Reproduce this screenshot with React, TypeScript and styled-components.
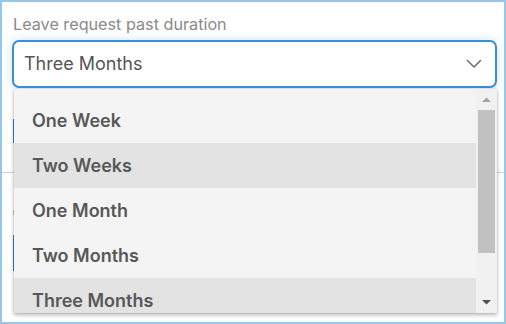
import React from "react";
import styled, { createGlobalStyle } from "styled-components";

const Global = createGlobalStyle`
  html, body { margin: 0; padding: 0; background: #ffffff; }
  body { font-family: Inter, "Noto Sans", sans-serif; }
  * { box-sizing: border-box; }
`;

const Frame = styled.div`
  position: relative;
  width: 506px;
  height: 324px;
  border: 2px solid #93c8ec;
  background: #ffffff;
  padding: 12px 7px 0 10px;
  overflow: hidden;
`;

const Label = styled.div`
  font-size: 16.2px;
  line-height: 20px;
  color: #8a8a8a;
  margin: 0 0 6px 1px;
`;

const SelectBox = styled.div`
  height: 48px;
  border: 2px solid #3b8fd9;
  border-radius: 7px;
  box-shadow: 0 0 10px rgba(59, 143, 217, 0.25);
  display: flex;
  align-items: center;
  justify-content: space-between;
  padding: 0 13px 0 10px;
  background: #ffffff;
`;

const Value = styled.span`
  font-size: 18px;
  color: #555555;
  line-height: 22px;
`;

const Underlay = styled.div`
  display: flex;
  flex-direction: column;
`;

const FieldEdge = styled.div<{ $top: number; $h: number }>`
  margin-top: ${(p) => p.$top}px;
  margin-left: 1px;
  height: ${(p) => p.$h}px;
  width: 20px;
  border-left: 1px solid #3d7fc1;
`;

const Divider = styled.div`
  margin: 29px -7px 0 -10px;
  height: 1px;
  background: #cfcfcf;
`;

const Tick = styled.div`
  margin: 37px 0 0 1px;
  width: 1px;
  height: 5px;
  background: #c4c4c4;
`;

const Menu = styled.div`
  position: absolute;
  left: 12px;
  top: 87px;
  width: 483px;
  height: 224px;
  background: #f4f4f4;
  box-shadow: 0 2px 4px rgba(0, 0, 0, 0.28), 0 0 2px rgba(0, 0, 0, 0.12);
  display: flex;
  overflow: hidden;
`;

const Options = styled.div`
  flex: 1;
  display: flex;
  flex-direction: column;
  padding-top: 9px;
`;

const Option = styled.div<{ $active?: boolean }>`
  flex: none;
  height: 45px;
  display: flex;
  align-items: center;
  padding-left: 18px;
  font-size: 18px;
  font-weight: 600;
  color: #585858;
  background: ${(p) => (p.$active ? "#e3e3e3" : "transparent")};
`;

const ScrollTrack = styled.div`
  width: 21px;
  flex: none;
  background: #f1f1f1;
  display: flex;
  flex-direction: column;
  align-items: center;
  padding: 0 2px;
`;

const Arrow = styled.div`
  height: 21px;
  width: 100%;
  display: flex;
  align-items: center;
  justify-content: center;
  flex: none;
`;

const Thumb = styled.div`
  width: 17px;
  height: 143px;
  background: #c1c1c1;
  flex: none;
`;

const Spacer = styled.div`
  flex: 1;
`;

const options = ["One Week", "Two Weeks", "One Month", "Two Months", "Three Months"];
const active = new Set(["Two Weeks", "Three Months"]);

export default function App() {
  return (
    <>
      <Global />
      <Frame>
        <Label>Leave request past duration</Label>
        <SelectBox>
          <Value>Three Months</Value>
          <svg width="16" height="10" viewBox="0 0 16 10" fill="none">
            <path d="M1.5 1.5 L8 8 L14.5 1.5" stroke="#707070" strokeWidth="1.6" strokeLinecap="round" strokeLinejoin="round" />
          </svg>
        </SelectBox>
        <Underlay>
          <FieldEdge $top={31} $h={24} />
          <Divider />
          <Tick />
          <FieldEdge $top={20} $h={36} />
        </Underlay>
        <Menu>
          <Options>
            {options.map((o) => (
              <Option key={o} $active={active.has(o)}>
                {o}
              </Option>
            ))}
          </Options>
          <ScrollTrack>
            <Arrow>
              <svg width="9" height="5" viewBox="0 0 9 5">
                <path d="M0 5 L4.5 0.5 L9 5 Z" fill="#a3a3a3" />
              </svg>
            </Arrow>
            <Thumb />
            <Spacer />
            <Arrow>
              <svg width="9" height="5" viewBox="0 0 9 5">
                <path d="M0 0 L9 0 L4.5 4.5 Z" fill="#505050" />
              </svg>
            </Arrow>
          </ScrollTrack>
        </Menu>
      </Frame>
    </>
  );
}
